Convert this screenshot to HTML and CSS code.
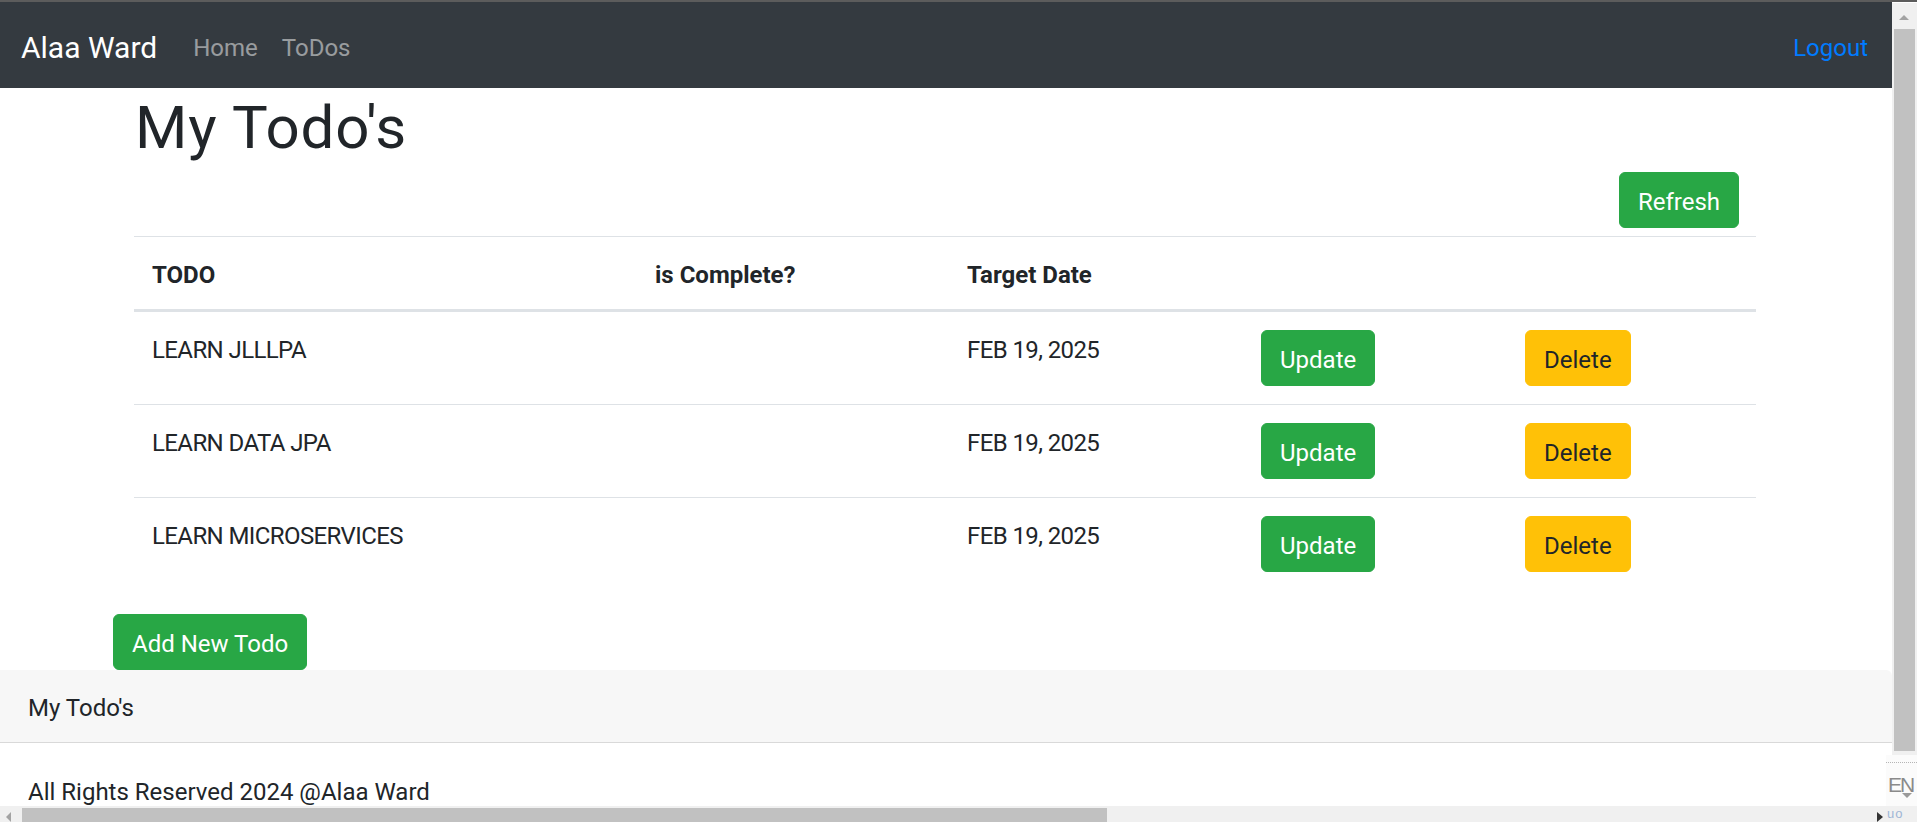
FILE: index.html
```html
<!DOCTYPE html>
<html lang="en">
<head>
<meta charset="utf-8">
<title>My Todo's</title>
<link rel="stylesheet" href="styles.css">
</head>
<body>
<div class="top-stripe"></div>
<div class="page">
  <nav class="navbar">
    <a class="brand" href="#">Alaa Ward</a>
    <ul class="nav">
      <li><a class="nav-link" href="#">Home</a></li>
      <li><a class="nav-link" href="#">ToDos</a></li>
    </ul>
    <ul class="nav nav-right">
      <li><a class="nav-link logout" href="#">Logout</a></li>
    </ul>
  </nav>

  <div class="container">
    <div class="inner">
      <h1>My Todo's</h1>
      <div class="toolbar">
        <button class="btn btn-success btn-refresh">Refresh</button>
      </div>
      <table class="table">
        <thead>
          <tr>
            <th class="c-todo">TODO</th>
            <th class="c-done">is Complete?</th>
            <th class="c-date">Target Date</th>
            <th class="c-upd"></th>
            <th class="c-del"></th>
          </tr>
        </thead>
        <tbody>
          <tr>
            <td>LEARN JLLLPA</td>
            <td></td>
            <td>FEB 19, 2025</td>
            <td><button class="btn btn-success">Update</button></td>
            <td><button class="btn btn-warning">Delete</button></td>
          </tr>
          <tr>
            <td>LEARN DATA JPA</td>
            <td></td>
            <td>FEB 19, 2025</td>
            <td><button class="btn btn-success">Update</button></td>
            <td><button class="btn btn-warning">Delete</button></td>
          </tr>
          <tr>
            <td>LEARN MICROSERVICES</td>
            <td></td>
            <td>FEB 19, 2025</td>
            <td><button class="btn btn-success">Update</button></td>
            <td><button class="btn btn-warning">Delete</button></td>
          </tr>
        </tbody>
      </table>
    </div>
    <button class="btn btn-success">Add New Todo</button>
  </div>

  <footer class="card">
    <div class="card-header">My Todo's</div>
    <div class="card-body">All Rights Reserved 2024 @Alaa Ward</div>
  </footer>
</div>

<div class="vscroll">
  <span class="arrow-up"></span>
  <div class="vthumb"></div>
</div>
<div class="lang">
  <div class="lang-dots"></div>
  <span class="lang-text">EN</span>
  <span class="lang-caret"></span>
</div>
<div class="hscroll">
  <span class="arrow-left"></span>
  <div class="hthumb"></div>
  <span class="arrow-right"></span>
  <span class="tray">uo</span>
</div>
</body>
</html>
```
FILE: styles.css
```css
* { box-sizing: border-box; }

html, body {
  margin: 0;
  padding: 0;
}

body {
  font-family: Roboto, "Noto Sans", "Liberation Sans", sans-serif;
  font-size: 24px;
  line-height: 1.5;
  color: #212529;
  background: #fff;
  overflow: hidden;
  height: 822px;
}

.top-stripe {
  height: 2px;
  background: #5c5c5c;
}

.page {
  width: 1892px;
}

/* navbar */
.navbar {
  height: 86px;
  background: #343a40;
  display: flex;
  align-items: center;
  padding: 0 24px 0 21px;
}

.brand {
  font-size: 30px;
  line-height: 45px;
  color: #fff;
  text-decoration: none;
  margin-right: 24px;
  padding-top: 5px;
}

.nav {
  display: flex;
  list-style: none;
  margin: 0;
  padding: 0;
}

.nav-link {
  display: block;
  padding: 6px 12px 0;
  line-height: 36px;
  color: rgba(255, 255, 255, 0.5);
  text-decoration: none;
}

.nav-right {
  margin-left: auto;
}

.logout {
  color: #007bff;
  padding-right: 0;
}

/* content */
.container {
  width: 1710px;
  margin: 0 auto;
  padding: 0 22px;
}

.inner {
  padding: 0 23px 0 21px;
}

h1 {
  font-size: 60px;
  line-height: 72px;
  font-weight: 400;
  margin: 0 0 8px;
  padding: 4px 0 0 1px;
  letter-spacing: 0.8px;
}

.toolbar {
  display: flex;
  justify-content: flex-end;
  padding-right: 17px;
  margin-bottom: 8px;
}

.btn {
  font-family: inherit;
  font-size: 24px;
  line-height: 36px;
  padding: 11px 18px 7px;
  border: 1px solid transparent;
  border-radius: 6px;
  display: inline-block;
  cursor: pointer;
  height: 56px;
  vertical-align: top;
}

.btn-success {
  background: #28a745;
  border-color: #28a745;
  color: #fff;
}

.btn-warning {
  background: #ffc107;
  border-color: #ffc107;
  color: #212529;
}

/* table */
.table {
  width: 100%;
  border-collapse: separate;
  border-spacing: 0;
  margin-bottom: 24px;
  table-layout: fixed;
}

.table th,
.table td {
  text-align: left;
  vertical-align: top;
  padding: 20px 18px 16px;
  line-height: 36px;
}

.table th {
  font-weight: 700;
  border-top: 1px solid #dee2e6;
  border-bottom: 3px solid #dee2e6;
}

.table td {
  border-top: 1px solid #dee2e6;
  letter-spacing: -0.6px;
}

.table td .btn {
  letter-spacing: 0;
  margin: -2px 0 2px;
}

.table tbody tr:first-child td {
  border-top: 0;
}

.c-todo { width: 503px; }
.c-done { width: 312px; }
.c-date { width: 294px; }
.c-upd { width: 264px; }
.c-del { width: 249px; }

/* footer card */
.card {
  border-top-right-radius: 6px;
  overflow: hidden;
}

.card-header {
  background: #f7f7f7;
  border-bottom: 1px solid #d9d9d9;
  padding: 20px 28px 16px;
  line-height: 36px;
  height: 73px;
}

.card-body {
  padding: 31px 28px 27px;
  line-height: 36px;
}

/* browser chrome overlays */
.vscroll {
  position: fixed;
  top: 3px;
  right: 0;
  width: 25px;
  height: 752px;
  background: #f0f0f0;
}

.arrow-up {
  position: absolute;
  left: 7px;
  top: 12px;
  width: 0;
  height: 0;
  border-left: 5.5px solid transparent;
  border-right: 5.5px solid transparent;
  border-bottom: 5px solid #a3a3a3;
}

.vthumb {
  position: absolute;
  left: 2px;
  top: 26px;
  width: 21px;
  height: 722px;
  background: #c1c1c1;
}

.lang {
  position: fixed;
  right: 0;
  top: 755px;
  width: 31px;
  height: 51px;
  background: #fbfbfb;
}

.lang-dots {
  position: absolute;
  left: 0;
  right: 0;
  top: 7px;
  border-top: 1px dotted #b5b5b5;
}

.lang-text {
  position: absolute;
  left: 2px;
  top: 17px;
  font-family: "Liberation Sans", sans-serif;
  font-size: 21px;
  line-height: 26px;
  color: #8a8a8a;
  letter-spacing: -2px;
}

.lang-caret {
  position: absolute;
  left: 16px;
  top: 38px;
  width: 0;
  height: 0;
  border-left: 5px solid transparent;
  border-right: 5px solid transparent;
  border-top: 5px solid #9a9a9a;
}

.hscroll {
  position: fixed;
  left: 0;
  bottom: 0;
  width: 1917px;
  height: 16px;
  background: #f0f0f0;
}

.arrow-left {
  position: absolute;
  left: 6px;
  top: 6px;
  width: 0;
  height: 0;
  border-top: 5px solid transparent;
  border-bottom: 5px solid transparent;
  border-right: 5px solid #a3a3a3;
}

.hthumb {
  position: absolute;
  left: 22px;
  top: 2px;
  width: 1085px;
  height: 14px;
  background: #c1c1c1;
}

.arrow-right {
  position: absolute;
  left: 1877px;
  top: 6px;
  width: 0;
  height: 0;
  border-top: 5px solid transparent;
  border-bottom: 5px solid transparent;
  border-left: 6px solid #333;
}

.tray {
  position: absolute;
  left: 1887px;
  top: 1px;
  font-family: "Liberation Sans", sans-serif;
  font-size: 13px;
  line-height: 14px;
  color: #9fb6d6;
  letter-spacing: 1px;
}
```
